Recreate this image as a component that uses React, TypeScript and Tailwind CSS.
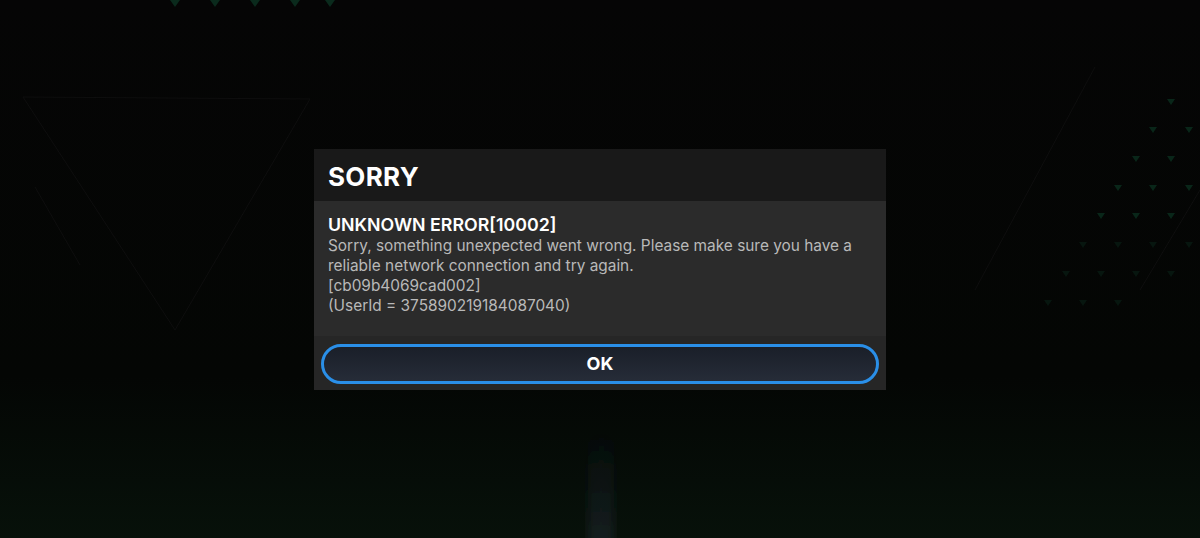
import React from "react";

const topMarks = [175, 215, 255, 295, 330];
const rightMarks: [number, number][] = [
  [1171, 99], [1153, 127], [1189, 127], [1136, 156], [1171, 156],
  [1118, 185], [1153, 185], [1189, 185], [1101, 213], [1136, 213],
  [1171, 213], [1083, 242], [1118, 242], [1153, 242], [1189, 242],
  [1066, 271], [1101, 271], [1136, 271], [1171, 271], [1048, 300],
  [1083, 300], [1118, 300],
];

function Backdrop() {
  return (
    <svg className="absolute inset-0 h-full w-full" viewBox="0 0 1200 538" preserveAspectRatio="none">
      <defs>
        <linearGradient id="floor" x1="0" y1="0" x2="0" y2="1">
          <stop offset="0" stopColor="#050505" />
          <stop offset="0.7" stopColor="#040604" />
          <stop offset="1" stopColor="#07110a" />
        </linearGradient>
        <linearGradient id="beam" x1="0" y1="0" x2="0" y2="1">
          <stop offset="0" stopColor="#1a2230" stopOpacity="0" />
          <stop offset="1" stopColor="#2a3140" stopOpacity="0.45" />
        </linearGradient>
        <filter id="soft">
          <feGaussianBlur stdDeviation="5" />
        </filter>
      </defs>
      <rect width="1200" height="538" fill="url(#floor)" />
      <rect x="588" y="420" width="26" height="130" fill="url(#beam)" filter="url(#soft)" />
      <g stroke="#0e0e0e" strokeWidth="1" fill="none">
        <path d="M23 97 L310 99 L175 330 Z" />
        <path d="M35 187 L80 265" />
        <path d="M1095 67 L975 290" />
        <path d="M1200 190 L1140 290" />
      </g>
      <g fill="#0a2a1c">
        {topMarks.map((x) => (
          <path key={x} d={`M${x - 5} 0 L${x + 5} 0 L${x} 7 Z`} />
        ))}
        {rightMarks.map(([x, y]) => (
          <path key={`${x}-${y}`} d={`M${x - 4} ${y} L${x + 4} ${y} L${x} ${y + 6} Z`} opacity={y > 230 ? 0.45 : 0.9} />
        ))}
      </g>
    </svg>
  );
}

export default function App() {
  return (
    <div
      className="relative flex h-[538px] w-full items-center justify-center overflow-hidden bg-[#050505]"
      style={{ fontFamily: "Inter, 'Noto Sans', sans-serif" }}
    >
      <Backdrop />
      <div className="relative w-[572px] bg-[#2b2b2b]">
        <div className="flex h-[52px] items-center bg-[#191919] px-[14px] pt-[3px]">
          <h1 className="text-[26px] font-bold tracking-[0.3px] text-white">SORRY</h1>
        </div>
        <div className="px-[14px] pb-[20px] pt-[13px]">
          <h2 className="text-[17.8px] font-semibold leading-[22px] text-white">UNKNOWN ERROR[10002]</h2>
          <p className="text-[15.4px] leading-[20px] text-[#b9b9b9]">
            Sorry, something unexpected went wrong. Please make sure you have a reliable network connection and try again.
            <br />
            [cb09b4069cad002]
            <br />
            (UserId = 375890219184087040)
          </p>
        </div>
        <div className="bg-[#262626] px-[7px] pb-[6px] pt-[8px]">
          <button className="flex h-[40px] w-full items-center justify-center rounded-full border-[3px] border-[#2a8fe8] bg-gradient-to-b from-[#1a1f29] to-[#262c38] text-[18px] font-bold text-white">
            OK
          </button>
        </div>
      </div>
    </div>
  );
}
